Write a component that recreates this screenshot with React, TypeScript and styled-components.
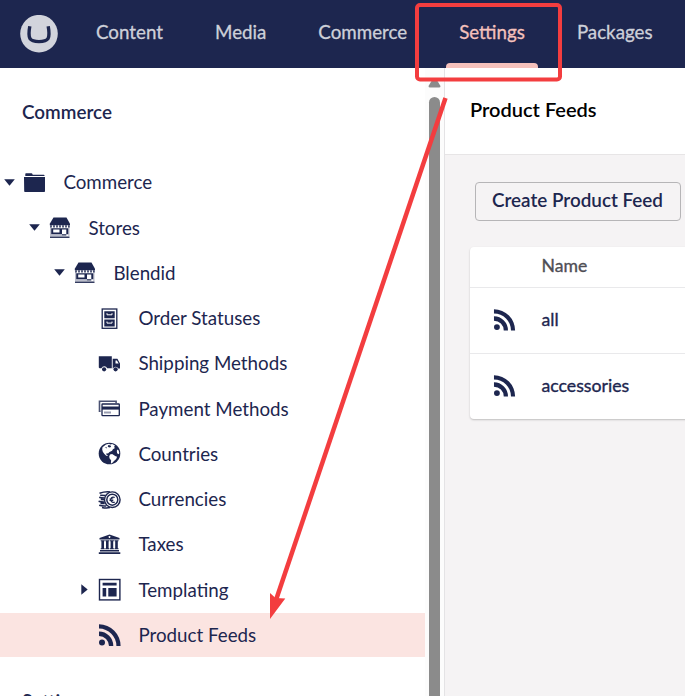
import React from "react";
import styled, { createGlobalStyle } from "styled-components";

const navy = "#1d264f";

const GlobalStyle = createGlobalStyle`
  * { box-sizing: border-box; }
  body { margin: 0; background: #fff; overflow: hidden; }
`;

const Page = styled.div`
  position: relative;
  width: 685px;
  height: 696px;
  overflow: hidden;
  display: flex;
  flex-direction: column;
  font-family: Lato, "Liberation Sans", sans-serif;
  font-size: 18.75px;
  color: ${navy};
`;

const TopBar = styled.header`
  height: 68px;
  flex: none;
  display: flex;
  background: ${navy};
`;

const Logo = styled.svg`
  width: 38px;
  height: 38px;
  margin: 15px 12px 0 20px;
  flex: none;
`;

const NavItem = styled.a<{ $width: number; $active?: boolean }>`
  width: ${(p) => p.$width}px;
  flex: none;
  display: flex;
  flex-direction: column;
  align-items: center;
  white-space: nowrap;
  line-height: 24px;
  padding-top: 20px;
  color: ${(p) => (p.$active ? "#f5c1bc" : "#cdd0d9")};
  -webkit-text-stroke: 0.3px currentColor;
  &::after {
    content: "";
    width: 92px;
    height: 5px;
    margin-top: 19px;
    border-radius: 4px 4px 0 0;
    background: ${(p) => (p.$active ? "#f5c1bc" : "transparent")};
  }
`;

const Body = styled.div`
  flex: 1;
  min-height: 0;
  display: flex;
`;

const Sidebar = styled.aside`
  width: 425px;
  flex: none;
  overflow: hidden;
`;

const SectionTitle = styled.h2<{ $top: number }>`
  margin: ${(p) => p.$top}px 0 0 22px;
  font-size: 18.85px;
  line-height: 24px;
  font-weight: 600;
`;

const Tree = styled.div`
  margin-top: 36.36px;
  display: flex;
  flex-direction: column;
  gap: 1.25px;
`;

const TreeRow = styled.div<{ $depth: number; $selected?: boolean }>`
  height: 44px;
  display: flex;
  align-items: center;
  padding-left: ${(p) => 4 + p.$depth * 25}px;
  background: ${(p) => (p.$selected ? "#fbe4e1" : "transparent")};
`;

const Caret = styled.svg`
  width: 11px;
  height: 11px;
  margin-right: 8px;
  flex: none;
  fill: ${navy};
`;

const Glyph = styled.svg`
  width: 23px;
  height: 23px;
  flex: none;
  overflow: visible;
  fill: ${navy};
`;

const TreeLabel = styled.span`
  margin-left: 17.4px;
  line-height: 24px;
  white-space: nowrap;
`;

const ScrollTrack = styled.div`
  width: 20px;
  flex: none;
  display: flex;
  flex-direction: column;
  align-items: center;
  background: #fcfcfc;
  border-right: 1px solid #e4e3e5;
`;

const ScrollArrow = styled.svg`
  width: 13px;
  height: 10px;
  margin-top: 10px;
  fill: #8b8b8b;
`;

const Thumb = styled.div`
  width: 11px;
  flex: 1;
  margin-top: 9px;
  border-radius: 6px 6px 0 0;
  background: #8b8b8b;
`;

const Main = styled.main`
  flex: 1;
  min-width: 0;
  background: #f5f3f4;
`;

const MainHeader = styled.div`
  height: 87px;
  padding: 29px 0 0 25px;
  border-bottom: 1px solid #e7e5e6;
  background: #fff;
  color: #000;
  font-size: 20px;
  font-weight: 600;
  line-height: 24px;
`;

const CreateButton = styled.button`
  display: block;
  width: 206px;
  height: 39px;
  margin: 27px 0 0 30px;
  padding: 0 1px 4px 0;
  border: 1px solid #b6b5b7;
  border-radius: 4px;
  background: transparent;
  color: ${navy};
  font: 600 18.85px Lato, sans-serif;
  white-space: nowrap;
`;

const Table = styled.div`
  margin: 26px -10px 0 25px;
  background: #fff;
  border-radius: 4px;
  box-shadow: 0 1px 2px rgba(0, 0, 0, 0.22);
`;

const TableHead = styled.div`
  height: 40px;
  padding: 7px 0 0 71.5px;
  line-height: 24px;
  font-size: 17.6px;
  color: #4f4e55;
  -webkit-text-stroke: 0.35px currentColor;
`;

const TableRow = styled.div`
  height: 66px;
  border-top: 1px solid #e9e9eb;
  display: flex;
  align-items: center;
  padding: 0 0 2px 22.5px;
  gap: 26.5px;
  font-size: 17.7px;
  -webkit-text-stroke: 0.35px currentColor;
`;

const RowGlyph = styled(Glyph)`
  width: 22.5px;
  height: 22.5px;
`;

const Annotation = styled.svg`
  position: absolute;
  inset: 0;
  width: 685px;
  height: 696px;
  pointer-events: none;
`;

const Feed = () => (
  <>
    <circle cx="4" cy="19.5" r="3" />
    <path d="M1 8.500V13a10 10 0 0 1 10 10h4.300A14.400 14.400 0 0 0 1 8.500zM1 1.300v4.300A17.400 17.400 0 0 1 18.400 23h4.200A21.600 21.600 0 0 0 1 1.300z" />
  </>
);

const Store = () => (
  <>
    <path d="M5.500 1.500h13l3.500 6.200v1.600H1.800V7.700z" />
    <path
      d="M3 9.200v2.200M6 9.200v2.200M9 9.200v2.200M12 9.200v2.200M15 9.200v2.200M18 9.200v2.200M20.900 9.200v2.200"
      stroke={navy}
      strokeWidth="1.500"
    />
    <path d="M2 11.200h1.200V20H2zM20.300 11.200h1.200V20h-1.200zM3 18.400h11V20H3z" opacity=".3" />
    <path fillRule="evenodd" d="M3.200 12.200H20.300V18.300H3.200zM5.200 13.500v3.100h6.300v-3.100zM14 13.500v6h4.300v-6z" />
    <path d="M2 20.500h19.500v1.400H2z" />
  </>
);

const glyphs: Record<string, React.ReactNode> = {
  feed: <Feed />,
  store: <Store />,
  folder: (
    <>
      <path d="M2.300 4.300V3q0-.7.700-.7h5.500q.8 0 .9.700l.3.800h11q.8 0 .9 1.300H2.300z" />
      <path d="M1 5.900h21v14.300q0 .8-.8.800H2q-.8 0-.8-.8z" />
    </>
  ),
  cabinet: (
    <>
      <rect x="4.200" y="2" width="14.600" height="19.300" fill="#fff" stroke={navy} strokeWidth="1.300" />
      <path d="M6.300 4.200h10.400v7H6.300zM6.300 12.500h10.400v6.900H6.300z" />
      <path d="M9 6.200v1.600h5V6.200M9 14.500v1.600h5v-1.600" fill="none" stroke="#fff" strokeWidth="1" />
    </>
  ),
  truck: (
    <>
      <path d="M.8 4.200h13v12H9.200a3.200 3.200 0 0 0-5.800 0H1.600l-.8-.8z" />
      <path fillRule="evenodd" d="M14.700 6.800h4.700l2.600 4.600v5h-1.700a3 3 0 0 0-5.300 0h-.3zM17.500 8.500v3.100h3.200l-1.800-3.100z" />
      <circle cx="6.100" cy="17.300" r="2.100" />
      <circle cx="17.600" cy="17.300" r="2.100" />
    </>
  ),
  card: (
    <>
      <path d="M2.600 14.200H1.500V4.300h16.600v1.900" fill="none" stroke={navy} strokeWidth="1.600" opacity=".8" />
      <rect x="4" y="7" width="17.300" height="11.600" rx=".6" fill="#fff" stroke={navy} strokeWidth="1.300" />
      <path d="M4 9.500h17.400v3.100H4z" />
      <path d="M6 14.500h7v2H6z" opacity=".45" />
    </>
  ),
  globe: (
    <>
      <circle cx="11.500" cy="11.500" r="10.800" />
      <path
        fill="#fff"
        d="M4.500 5.200 8 2.600l3-.9 1.200.9 2-.5 2.800 1.500-1 1.400 1 1-2.100 1.200-.8 1.600-2.600 1.200-1.500 1.400-1.500-.2-.2 1.400 1.400.8.3.7-1.800-.4-2-1.900-1.400-2.100-.6-2.200zM12 12.500l2.100-.4 2 1.100 1 .9 2 .7-.9 2.300-1.900 1.600-2.400 2.600-1 .2.200-3.200-1.500-1.700-.4-2zM19.300 7.500l1.400 1 .6 2.500-.6 1.300-1.600-1.100-.3-2.200z"
      />
      <path d="m10.400 3 2.200.5.5 1.500-2 .4-1.400-1zM7 5l2 .4-.6 1.100z" />
    </>
  ),
  coins: (
    <>
      <path
        d="M12 3.900C8 3.500 4.500 4.200 1.500 5.300M1.200 9.300q2.500.9 6 .8M.6 13.200q2.800.9 6 .8M1.200 17.200q3 1 7 .7M2.200 7.300l5.500.1M2.800 11.600l4 .1M2.500 15.500l4.200.1M4 19.400q4 1 8 .2"
        fill="none"
        stroke={navy}
        strokeWidth="1.500"
      />
      <circle cx="14.300" cy="11.700" r="7.800" fill="#fff" stroke={navy} strokeWidth="1.400" />
      <circle cx="14.300" cy="11.700" r="5.500" fill="none" stroke={navy} strokeWidth="1.500" />
      <path d="M16.700 9.500a2.600 2.600 0 1 0 0 4.400M11.500 11h3.800M11.500 12.500h3.800" fill="none" stroke={navy} strokeWidth="1.200" />
    </>
  ),
  bank: (
    <>
      <path fillRule="evenodd" d="M11.500 1.500 21.500 5v1.500h-20V5zM11.500 3.100a.9.900 0 1 0 .01 0z" />
      <path d="M2.700 7.300h4v1H6v7h.7v1h-4v-1h.7v-7h-.7zM7.300 7.300h4v1h-.7v7h.7v1h-4v-1H8v-7h-.7zM11.900 7.300h4v1h-.7v7h.7v1h-4v-1h.7v-7h-.7zM16.500 7.300h4v1h-.7v7h.7v1h-4v-1h.7v-7h-.7zM2 17h19v1.600H2zM.8 19.200h21.500V21H.8z" />
    </>
  ),
  layout: (
    <>
      <rect x="1.500" y="1.500" width="20.400" height="20.400" fill="#fff" stroke={navy} strokeWidth="1.400" />
      <path d="M4.600 4.800h14v2.800h-14zM4.600 10h3.600v8.600H4.600zM10.300 10h8.300v8.600h-8.300z" />
    </>
  ),
};

type Node = { icon: string; label: string; depth: number; open?: boolean; closed?: boolean; selected?: boolean };

const nodes: Node[] = [
  { icon: "folder", label: "Commerce", depth: 0, open: true },
  { icon: "store", label: "Stores", depth: 1, open: true },
  { icon: "store", label: "Blendid", depth: 2, open: true },
  { icon: "cabinet", label: "Order Statuses", depth: 3 },
  { icon: "truck", label: "Shipping Methods", depth: 3 },
  { icon: "card", label: "Payment Methods", depth: 3 },
  { icon: "globe", label: "Countries", depth: 3 },
  { icon: "coins", label: "Currencies", depth: 3 },
  { icon: "bank", label: "Taxes", depth: 3 },
  { icon: "layout", label: "Templating", depth: 3, closed: true },
  { icon: "feed", label: "Product Feeds", depth: 3, selected: true },
];

const navItems = [
  { label: "Content", width: 119 },
  { label: "Media", width: 103.5 },
  { label: "Commerce", width: 140.5 },
  { label: "Settings", width: 118, active: true },
  { label: "Packages", width: 127.5 },
];

export default function App() {
  return (
    <Page>
      <GlobalStyle />
      <TopBar>
        <Logo viewBox="0 0 38 38">
          <circle cx="19" cy="18.700" r="18.800" fill="#d2d4dc" />
          <path
            d="M9.800 11.200C8.500 18 8.700 21.200 10 23.700 11.500 26.100 15 26.600 19 26.600s7.500-.5 9-2.900c1.300-2.500 1.500-5.700.2-12.500"
            fill="none"
            stroke={navy}
            strokeWidth="3.400"
          />
        </Logo>
        {navItems.map((n) => (
          <NavItem key={n.label} $width={n.width} $active={n.active}>
            {n.label}
          </NavItem>
        ))}
      </TopBar>
      <Body>
        <Sidebar>
          <SectionTitle $top={32}>Commerce</SectionTitle>
          <Tree>
            {nodes.map((n) => (
              <TreeRow key={n.label} $depth={n.depth} $selected={n.selected}>
                <Caret viewBox="0 0 11 11">
                  {n.open && <path d="M.2 2.300h10.600l-5.300 6.400z" />}
                  {n.closed && <path d="M2.300.2v10.600l6.400-5.300z" />}
                </Caret>
                <Glyph viewBox="0 0 23 23">{glyphs[n.icon]}</Glyph>
                <TreeLabel>{n.label}</TreeLabel>
              </TreeRow>
            ))}
          </Tree>
          <SectionTitle $top={32.14}>Settings</SectionTitle>
        </Sidebar>
        <ScrollTrack>
          <ScrollArrow viewBox="0 0 13 10">
            <path d="M4.800 1q1.700-1.600 3.400 0l4 6.500q.8 2-1.200 2H2Q0 9.500.8 7.500z" />
          </ScrollArrow>
          <Thumb />
        </ScrollTrack>
        <Main>
          <MainHeader>Product Feeds</MainHeader>
          <CreateButton>Create Product Feed</CreateButton>
          <Table>
            <TableHead>Name</TableHead>
            {["all", "accessories"].map((name) => (
              <TableRow key={name}>
                <RowGlyph viewBox="0 0 23 23">
                  <Feed />
                </RowGlyph>
                {name}
              </TableRow>
            ))}
          </Table>
        </Main>
      </Body>
      <Annotation viewBox="0 0 685 696">
        <g fill="none" stroke="#f33d3f">
          <rect x="417" y="5" width="143" height="74.500" rx="3" strokeWidth="4" />
          <path d="M445.500 98 276 600" strokeWidth="4.500" />
        </g>
        <path d="m270 593 5.500 5 9.800.5L270 619z" fill="#f33d3f" />
      </Annotation>
    </Page>
  );
}
